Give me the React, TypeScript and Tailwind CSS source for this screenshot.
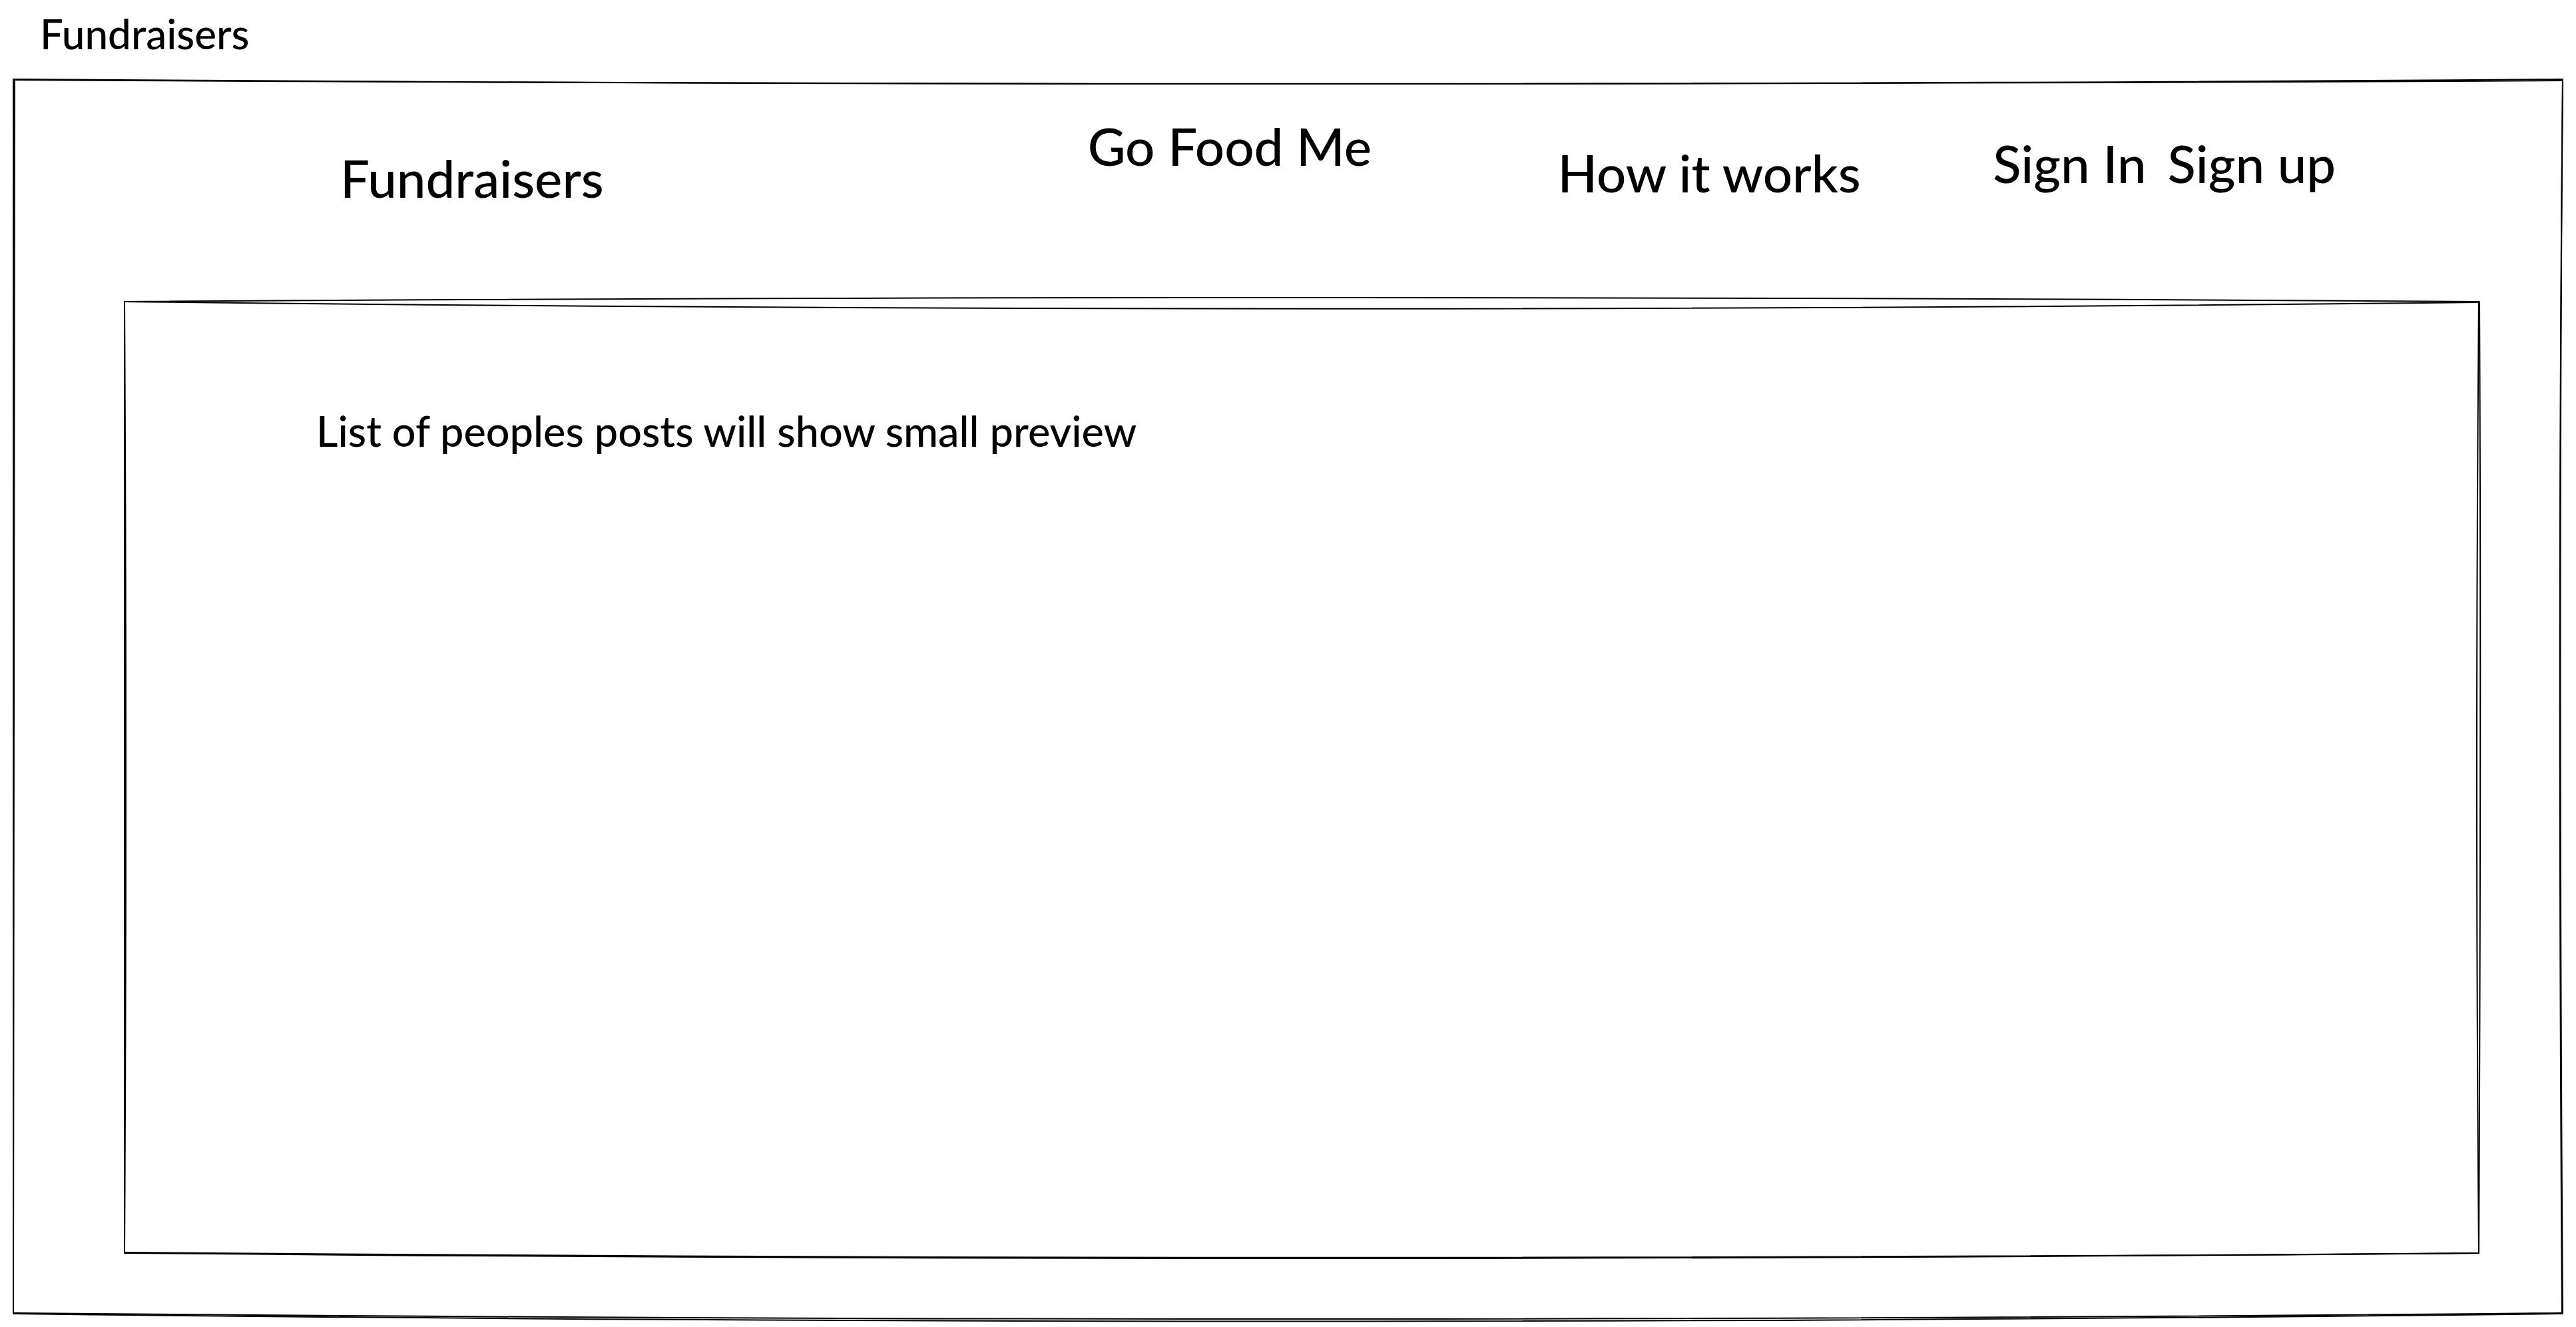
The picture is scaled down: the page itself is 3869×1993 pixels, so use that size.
import type { ReactNode } from "react";

type FrameProps = { viewBox: string; paths: string[] };

function SketchFrame({ viewBox, paths }: FrameProps) {
  return (
    <svg
      aria-hidden="true"
      viewBox={viewBox}
      preserveAspectRatio="none"
      className="pointer-events-none absolute inset-0 h-full w-full overflow-visible"
      fill="none"
      stroke="#000"
      strokeWidth="2"
      strokeLinecap="round"
    >
      {paths.map((d) => (
        <path key={d} d={d} vectorEffect="non-scaling-stroke" />
      ))}
    </svg>
  );
}

const pageFrame = [
  "M0 0 Q1915 14 3830 0",
  "M0 1 Q1915 12 3830 2",
  "M3830 1 Q3822 800 3829 1853",
  "M3830 1 Q3823 800 3830 1853",
  "M3830 1853 Q1915 1871 0 1853",
  "M3830 1854 Q1915 1877 0 1854",
  "M0 1853 Q-1 926 0 0",
  "M0 1853 Q0 926 2 0",
];

const listFrame = [
  "M0 0 Q1770 -12 3538 0",
  "M0 0 Q1770 21 3538 1",
  "M3537 0 Q3531 715 3537 1429",
  "M3538 0 Q3541 600 3537 1429",
  "M3537 1429 Q1770 1443 0 1428",
  "M3537 1429 Q1770 1445 0 1429",
  "M0 1428 Q3 715 0 0",
  "M0 1428 Q4 715 0 0",
];

function NavLink({ children }: { children: ReactNode }) {
  return (
    <a href="#" className="block whitespace-nowrap text-[78px] leading-[96px]">
      {children}
    </a>
  );
}

export default function App() {
  return (
    <div className="flex min-h-screen flex-col bg-white pb-5 font-['Virgil','Lato',sans-serif] font-medium text-black">
      <h1 className="px-[60px] pt-3.5 pb-[33px] text-[62px] leading-[72px]">Fundraisers</h1>
      <main className="relative mx-5 flex flex-1 flex-col pr-[125px] pb-[91px] pl-[167px]">
        <SketchFrame viewBox="0 0 3830 1854" paths={pageFrame} />
        <nav className="grid h-[334px] grid-cols-[1123fr_706fr_654fr_731fr] items-start pl-[324px]">
          <div className="pt-[100px]">
            <NavLink>Fundraisers</NavLink>
          </div>
          <div className="pt-[52px]">
            <NavLink>Go Food Me</NavLink>
          </div>
          <div className="pt-[92px]">
            <NavLink>How it works</NavLink>
          </div>
          <div className="flex gap-8 pt-[78px]">
            <NavLink>Sign In</NavLink>
            <NavLink>Sign up</NavLink>
          </div>
        </nav>
        <section className="relative flex-1 px-[288px] pt-[158px]">
          <SketchFrame viewBox="0 0 3538 1429" paths={listFrame} />
          <p className="text-[63px] leading-[72px]">List of peoples posts will show small preview</p>
        </section>
      </main>
    </div>
  );
}
